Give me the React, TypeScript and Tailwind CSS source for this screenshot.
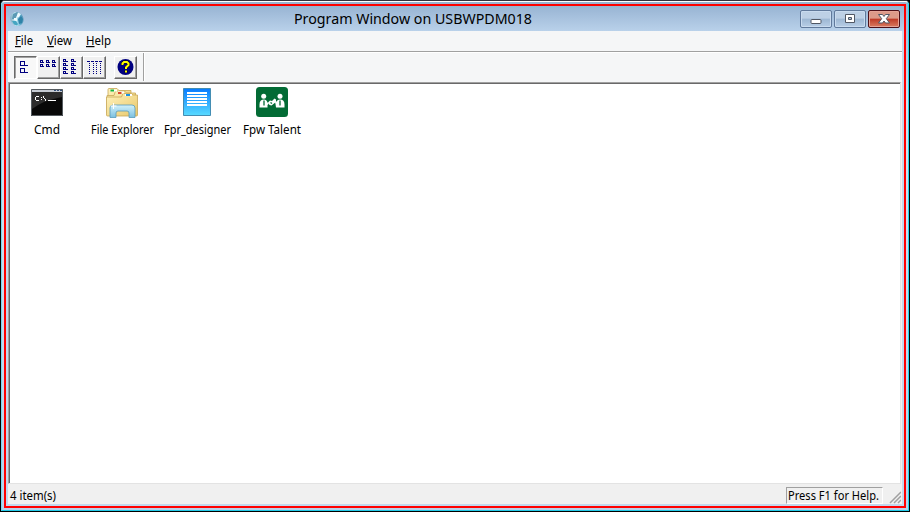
import React from 'react';

const labelFont = "font-['Noto_Sans','Open_Sans',sans-serif]";

function Label({ text, width, className = '' }: { text: React.ReactNode; width: number; className?: string }) {
  return (
    <svg className={`block h-4 shrink-0 overflow-visible ${className}`} style={{ width }}>
      <text x="0" y="12" fontSize="12" textLength={width} lengthAdjust="spacingAndGlyphs" fill="#000">{text}</text>
    </svg>
  );
}

function Globe() {
  return (
    <svg width="16" height="16" viewBox="0 0 16 16" className="shrink-0">
      <defs>
        <linearGradient id="globe" x1="0" y1=".3" x2="1" y2=".7">
          <stop offset="0" stopColor="#7fa9bd" />
          <stop offset=".4" stopColor="#c9eef8" />
          <stop offset=".75" stopColor="#5aa9c9" />
          <stop offset="1" stopColor="#5f92b4" />
        </linearGradient>
      </defs>
      <ellipse cx="7" cy="8" rx="6.4" ry="7.2" transform="rotate(-25 7 8)" fill="url(#globe)" />
      <path d="M3 3l4-2 2 1-2 3-2 3-3 0z" fill="#5b9ab5" />
      <path d="M8 8l3-3 2 3-1 4-3 1z" fill="#2f83a8" />
      <path d="M2 10l4 0 2 3-1 1.5-3-1z" fill="#45a5c2" />
      <path d="M8 1.5l3 1.5-2 3-3 1z" fill="#effbfe" />
      <path d="M4 7l3 0 0 3-3-1z" fill="#f0fdff" />
    </svg>
  );
}

const raised =
  'flex h-[23px] w-[23px] shrink-0 border border-l-white border-t-white border-r-[#696969] border-b-[#696969] bg-[#f0f0f0] shadow-[inset_-1px_-1px_0_#a0a0a0]';

function Item({ x, y, tail }: { x: number; y: number; tail: number }) {
  return <path d={`M${x + 0.5} ${y + 0.5}h2v2h-2zM${x + 3} ${y + 2.5}h${tail}`} />;
}

function ToolIcon({ kind }: { kind: string }) {
  return (
    <svg width="21" height="21" viewBox="0 0 21 21" fill="none" stroke="#000080" strokeWidth="1" shapeRendering="crispEdges">
      {kind === 'large' && <path d="M5.5 4.5h4v4h-4zM10 8.5h3M5.5 11.5h4v4h-4zM10 15.5h3" />}
      {kind === 'small' && [2, 8, 14].map((x) => [3, 7].map((y) => <Item key={`${x}-${y}`} x={x} y={y} tail={1} />))}
      {kind === 'list' && [2, 10].map((x) => [2, 6, 10, 14].map((y) => <Item key={`${x}-${y}`} x={x} y={y} tail={2} />))}
      {kind === 'details' && (
        <>
          <path d="M3 4.5h3M7 4.5h3M11 4.5h3M15 4.5h3" />
          <path d="M5.5 6v12M9.5 6v12M12.5 6v12M16.5 6v12" strokeDasharray="1 1" />
        </>
      )}
      {kind === 'help' && (
        <g shapeRendering="auto">
          <circle cx="10.5" cy="10" r="8" fill="#000080" stroke="none" />
          <path d="M7.5 8V6.5L9 5h3l1.5 1.5V8L11 10.5V12M11 13.5v2" stroke="#000" strokeWidth="3" />
          <path d="M7.5 8V6.5L9 5h3l1.5 1.5V8L11 10.5V12M11 13.5v2" stroke="#ff0" strokeWidth="2" />
        </g>
      )}
    </svg>
  );
}

function CmdIcon() {
  return (
    <svg width="32" height="32" viewBox="0 0 32 32">
      <path fill="#080808" d="M0 2h32v27H0z" />
      <path fill="#c5cbd3" d="M0 2h32v3H0z" />
      <path fill="#34507a" d="M23 3h2v1h-2zM26 3h2v1h-2zM29 3h2v1h-2z" />
      <path fill="#2c2c2c" d="M1 5h30v5Q13 13 1 22z" />
      <path d="M.5 2.5h31v26H.5z" fill="none" stroke="#555b60" />
      <path d="M5 9.5h3M4.5 10v3M5 13.5h3M10.5 10v1M10.5 12v1M12.5 9v2M13.5 11v1M14.5 12v2M17 13.5h8" stroke="#fff" fill="none" shapeRendering="crispEdges" />
    </svg>
  );
}

function ExplorerIcon() {
  return (
    <svg width="34" height="32" viewBox="0 0 34 32">
      <defs>
        <linearGradient id="folder" x2="1" y2="1"><stop stopColor="#fff3bd" /><stop offset="1" stopColor="#e8c769" /></linearGradient>
        <linearGradient id="stand" x2="0" y2="1"><stop stopColor="#d0f1fb" /><stop offset="1" stopColor="#7dc0df" /></linearGradient>
      </defs>
      <g fill="url(#folder)" stroke="#c8a757" strokeWidth=".8">
        <path d="M3 2.5q0-1 1-1h8l2 2h12v22H3z" />
        <path d="M2 8.5h7l1.5-4.5h9l2 2h9v20H2z" />
        <path d="M1.5 10h15l1.5-3.5h8l2 1.5h4.5v20q0 1-1 1h-29q-1 0-1-1z" />
      </g>
      <path fill="#fff" d="M6 2.5h6v2H6zM13 4.5h6v2h-6zM20 7h7v2h-7z" />
      <path fill="#12b53c" d="M5.5 2.5h3.5v2H5.5z" /><path fill="#dc4a30" d="M13 5h3.5v2H13z" /><path fill="#1b93e3" d="M21 7h4v2h-4z" />
      <path d="M5 30.5V21q0-3 3-3h19q3 0 3 3v9.5h-6v-4.500q0-2-2-2H13q-2 0-2 2v4.500z" fill="url(#stand)" stroke="#559bbd" strokeWidth=".8" />
      <path d="M8.500 16v6M5.500 19h6" stroke="#fff" strokeWidth="1" />
    </svg>
  );
}

function DesignerIcon() {
  return (
    <svg width="28" height="32" viewBox="0 0 28 32">
      <defs><linearGradient id="paper" x2="0" y2="1"><stop stopColor="#087bff" /><stop offset="1" stopColor="#59dbff" /></linearGradient></defs>
      <path d="M.5 1.5h27v27H.5z" fill="url(#paper)" stroke="#438db3" />
      <path d="M4 6h20M4 9h20M4 12h20M4 15h20M4 18h20" stroke="#fff" strokeWidth="1.8" />
    </svg>
  );
}

function TalentIcon() {
  return (
    <svg width="32" height="32" viewBox="0 0 32 32">
      <rect y="0" width="32" height="30" rx="3.500" fill="#036b35" />
      <g fill="#fff">
        <circle cx="7.700" cy="9.200" r="2.500" /><circle cx="24" cy="9.200" r="2.500" />
        <path d="M3.500 20.500v-3q0-5 4.500-5 2.500 0 3.500 3l1.500 1-1.500 1.500v2.500z" />
        <path d="M28.500 20.500v-3q0-5-4.500-5-2.500 0-3.500 2l-1.500.5.500 2 .500 3.500z" />
        <path d="M12 15.500l2-2 2 .500 2.500-2.500 1.500 1v2.500l-4.500 3.500-2-.500z" />
      </g>
      <path d="M8 13.500v5M24 13.500v5M14.500 15.500l1.500 1" stroke="#036b35" strokeWidth="1.300" fill="none" />
    </svg>
  );
}

function Caption({ kind }: { kind: 'min' | 'max' | 'close' }) {
  const close = kind === 'close';
  return (
    <div className={`flex h-[18px] w-8 items-center justify-center rounded-[2px] border ${close ? 'border-[#4c1018] bg-linear-to-b from-[#dc9a89] from-45% via-[#bd3825] via-50% to-[#d97b60] shadow-[inset_0_0_0_1px_#e5a396]' : 'border-[#60799b] bg-linear-to-b from-[#bdd0e5] from-45% via-[#9db7d3] via-50% to-[#b8cee6] shadow-[inset_0_0_0_1px_#c9dbef]'}`}>
      <svg width="12" height="12" viewBox="0 0 12 12" fill="#fff" stroke="#505764">
        {kind === 'min' && <rect x="1" y="6.500" width="10" height="4" rx="1" />}
        {kind === 'max' && <path fillRule="evenodd" d="M1.500 1.500h9v8h-9zM4.500 4.500v2h3v-2z" />}
        {close && <path d="M.500 1.500h4L6 3.500l1.500-2h4L8.300 5.700l3.200 4.300h-4L6 8l-1.500 2h-4l3.200-4.300z" />}
      </svg>
    </div>
  );
}

const apps = [
  { name: 'Cmd', width: 26, icon: <CmdIcon />, offset: '' },
  { name: 'File Explorer', width: 63, icon: <ExplorerIcon />, offset: 'ml-[2px]' },
  { name: 'Fpr_designer', width: 67, icon: <DesignerIcon />, offset: 'ml-[2px]' },
  { name: 'Fpw Talent', width: 58, icon: <TalentIcon />, offset: '' },
];

export default function App() {
  return (
    <div className={`h-[512px] w-[910px] overflow-hidden bg-black ${labelFont}`}>
      <div className="h-full rounded-t-[5px] border border-black border-t-[#35323d] bg-[#b8d0ea]">
        <div className="h-full rounded-t-[4px] border border-t-white border-l-[#75d8ef] border-r-[#22d4ed] border-b-[#22c9e7] bg-linear-to-b from-[#98b4d4] via-[#d4e2f1] via-20% to-[#b8d1ea] p-[2px]">
          <div className="flex h-full flex-col border-2 border-[#ff0000] bg-[#c3d8ed]">
            <header className="flex h-[25px] shrink-0 items-start bg-linear-to-b from-[#98b4d3] to-[#b9d1ea] pl-[4px] pr-[4px]">
              <div className="w-[284px] pt-[5px]"><Globe /></div>
              <svg className="mt-[3px] h-5 w-[238px] shrink-0 overflow-visible"><text x="0" y="15" fontSize="15" textLength="238" lengthAdjust="spacingAndGlyphs">Program Window on USBWPDM018</text></svg>
              <div className="ml-auto flex gap-[2px] pt-[4px]"><Caption kind="min" /><Caption kind="max" /><Caption kind="close" /></div>
            </header>
            <main className="mx-[2px] mb-[2px] flex min-h-0 flex-1 flex-col bg-[#f0f0f0]">
              <nav className="flex h-5 shrink-0 bg-[#f5f6f7] pl-[7px] pt-[2px]">
                <Label width={18} text={<><tspan textDecoration="underline">F</tspan>ile</>} className="mr-[14px]" />
                <Label width={25} text={<><tspan textDecoration="underline">V</tspan>iew</>} className="mr-[14px]" />
                <Label width={25} text={<><tspan textDecoration="underline">H</tspan>elp</>} />
              </nav>
              <div className="flex h-[31px] shrink-0 border-t border-[#a0a0a0] bg-[#f5f6f7] shadow-[inset_0_1px_0_#fff]">
                <div className="flex w-[135px] pl-[6px] pt-[4px]">
                  <div className="h-[23px] w-[23px] border border-l-[#696969] border-t-[#696969] border-r-white border-b-white bg-[#f8f8f8] shadow-[inset_1px_1px_0_#a0a0a0]"><ToolIcon kind="large" /></div>
                  <div className={raised}><ToolIcon kind="small" /></div>
                  <div className={raised}><ToolIcon kind="list" /></div>
                  <div className={raised}><ToolIcon kind="details" /></div>
                  <div className={`ml-2 ${raised}`}><ToolIcon kind="help" /></div>
                </div>
                <div className="mt-[1px] h-[28px] w-[2px] border-l border-[#a0a0a0] bg-white" />
              </div>
              <section className="flex h-[402px] w-[893px] shrink-0 border border-t-[#a0a0a0] border-l-[#a0a0a0] border-r-[#e3e3e3] border-b-[#e3e3e3] bg-white shadow-[inset_1px_1px_0_#696969]">
                {apps.map((app) => (
                  <div key={app.name} className="flex w-[75px] shrink-0 flex-col items-center pt-[4px]">
                    <div className="h-[35px]">{app.icon}</div>
                    <Label text={app.name} width={app.width} className={app.offset} />
                  </div>
                ))}
              </section>
              <footer className="flex flex-1 items-start pl-[2px] pt-[3px]">
                <Label text="4 item(s)" width={46} className="mt-[1px]" />
                <div className="ml-auto flex h-[17px] w-[97px] border border-t-[#a0a0a0] border-l-[#a0a0a0] border-r-white border-b-white pl-[1px]"><Label text="Press F1 for Help." width={91} /></div>
                <svg width="12" height="14" className="ml-[6px] mr-[1px] mt-[3px]" stroke="#a0a0a0"><path d="M1 13L12 2M5 13l7-7M9 13l3-3" strokeWidth="1.5" /></svg>
              </footer>
            </main>
          </div>
        </div>
      </div>
    </div>
  );
}
